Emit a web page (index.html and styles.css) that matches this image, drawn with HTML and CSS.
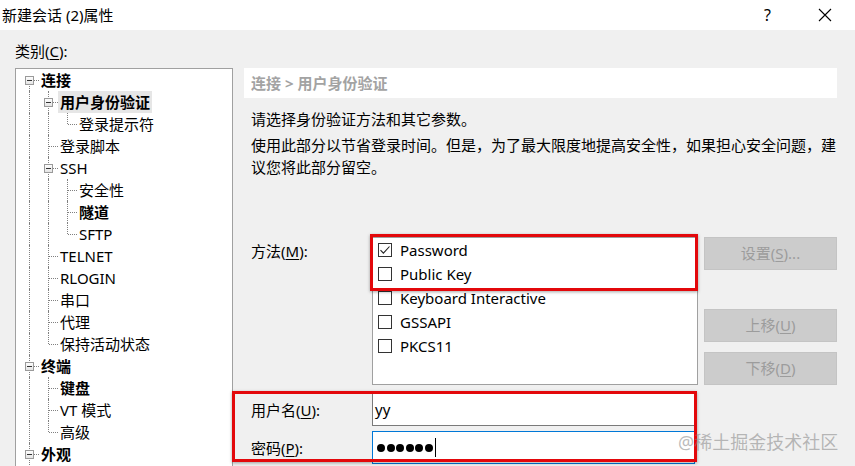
FILE: index.html
```html
<!DOCTYPE html>
<html lang="zh-CN">
<head>
    <meta charset="UTF-8">
    <title>新建会话 (2)属性</title>
    <link rel="stylesheet" href="styles.css">
</head>
<body>
    <div class="titlebar">
        <div class="title">新建会话 (2)属性</div>
        <div class="tb-btn">?</div>
        <div class="tb-btn">
            <svg width="14" height="14" viewBox="0 0 14 14"><path d="M1 1L13 13M13 1L1 13" stroke="#000" stroke-width="1.1" fill="none"/></svg>
        </div>
    </div>

    <div class="main">
        <div class="left">
            <div class="cat-label">类别(<u>C</u>):</div>
            <div class="tree">
                <div class="row"><span class="c f"><i class="box"></i></span><span class="txt b">连接</span></div>
                <div class="row"><span class="c v"></span><span class="c t"><i class="box"></i></span><span class="txt b sel">用户身份验证</span></div>
                <div class="row"><span class="c v"></span><span class="c v"></span><span class="c l"></span><span class="txt">登录提示符</span></div>
                <div class="row"><span class="c v"></span><span class="c t"></span><span class="txt">登录脚本</span></div>
                <div class="row"><span class="c v"></span><span class="c t"><i class="box"></i></span><span class="txt">SSH</span></div>
                <div class="row"><span class="c v"></span><span class="c v"></span><span class="c t"></span><span class="txt">安全性</span></div>
                <div class="row"><span class="c v"></span><span class="c v"></span><span class="c t"></span><span class="txt b">隧道</span></div>
                <div class="row"><span class="c v"></span><span class="c v"></span><span class="c l"></span><span class="txt">SFTP</span></div>
                <div class="row"><span class="c v"></span><span class="c t"></span><span class="txt">TELNET</span></div>
                <div class="row"><span class="c v"></span><span class="c t"></span><span class="txt">RLOGIN</span></div>
                <div class="row"><span class="c v"></span><span class="c t"></span><span class="txt">串口</span></div>
                <div class="row"><span class="c v"></span><span class="c t"></span><span class="txt">代理</span></div>
                <div class="row"><span class="c v"></span><span class="c l"></span><span class="txt">保持活动状态</span></div>
                <div class="row"><span class="c t"><i class="box"></i></span><span class="txt b">终端</span></div>
                <div class="row"><span class="c v"></span><span class="c t"></span><span class="txt b">键盘</span></div>
                <div class="row"><span class="c v"></span><span class="c t"></span><span class="txt">VT 模式</span></div>
                <div class="row"><span class="c v"></span><span class="c l"></span><span class="txt">高级</span></div>
                <div class="row"><span class="c t"><i class="box"></i></span><span class="txt b">外观</span></div>
            </div>
        </div>

        <div class="right">
            <div class="crumb">连接 &gt; 用户身份验证</div>
            <p class="desc">请选择身份验证方法和其它参数。</p>
            <p class="desc">使用此部分以节省登录时间。但是，为了最大限度地提高安全性，如果担心安全问题，建<br>议您将此部分留空。</p>

            <div class="method">
                <div class="label top">方法(<u>M</u>):</div>
                <div class="listbox">
                    <div class="item">
                        <span class="check">
                            <svg width="12" height="12" viewBox="0 0 12 12"><path d="M1.5 6.2L4.4 9.2L10.5 2.5" stroke="#222" stroke-width="1.1" fill="none"/></svg>
                        </span>Password
                    </div>
                    <div class="item"><span class="check"></span>Public Key</div>
                    <div class="item"><span class="check"></span>Keyboard Interactive</div>
                    <div class="item"><span class="check"></span>GSSAPI</div>
                    <div class="item"><span class="check"></span>PKCS11</div>
                </div>
                <div class="buttons">
                    <div class="btn">设置(<u>S</u>)...</div>
                    <div class="btn up">上移(<u>U</u>)</div>
                    <div class="btn down">下移(<u>D</u>)</div>
                </div>
            </div>

            <div class="field">
                <div class="label">用户名(<u>U</u>):</div>
                <div class="input">yy</div>
            </div>
            <div class="field pw">
                <div class="label">密码(<u>P</u>):</div>
                <div class="input focus">
                    <i class="dot"></i><i class="dot"></i><i class="dot"></i><i class="dot"></i><i class="dot"></i><i class="dot"></i><i class="caret"></i>
                </div>
            </div>
        </div>
    </div>

    <div class="mark mark-method"></div>
    <div class="mark mark-login"></div>
    <div class="watermark">@稀土掘金技术社区</div>
</body>
</html>
```

FILE: styles.css
```css
body {
    margin: 0;
    width: 855px;
    height: 466px;
    overflow: hidden;
    position: relative;
    background-color: #f0f0f0;
    font-family: "Noto Sans", "Noto Sans CJK SC", sans-serif;
    font-size: 15px;
    color: #000;
}
u {
    text-underline-offset: 2px;
}
.titlebar {
    height: 30px;
    background-color: #fff;
    display: flex;
    align-items: center;
    padding-right: 2px;
}
.title {
    flex: 1;
    padding-left: 2px;
    line-height: 30px;
}
.tb-btn {
    width: 57px;
    height: 30px;
    display: flex;
    align-items: center;
    justify-content: center;
    font-size: 16px;
}
.main {
    display: flex;
    padding: 10px 18px 0 15px;
    gap: 11px;
}
.left {
    width: 218px;
}
.cat-label {
    line-height: 22px;
}
.tree {
    margin-top: 6px;
    height: 420px;
    box-sizing: border-box;
    background-color: #fff;
    border: 1px solid #a0a0a0;
    padding-left: 4px;
}
.row {
    display: flex;
    height: 22px;
}
.c {
    width: 19px;
    flex: none;
    position: relative;
}
.c::before,
.c::after {
    content: "";
    position: absolute;
}
/* vertical line through the whole row */
.v::before,
.t::before {
    left: 9px;
    top: 0;
    bottom: 0;
    border-left: 1px dotted #808080;
}
/* elbow: only the top half */
.l::before {
    left: 9px;
    top: 0;
    height: 11px;
    border-left: 1px dotted #808080;
}
/* first root: only the bottom half */
.f::before {
    left: 9px;
    top: 11px;
    bottom: 0;
    border-left: 1px dotted #808080;
}
.t::after,
.l::after,
.f::after {
    left: 10px;
    right: 0;
    top: 11px;
    border-top: 1px dotted #808080;
}
.box {
    position: absolute;
    left: 5px;
    top: 7px;
    width: 9px;
    height: 9px;
    box-sizing: border-box;
    border: 1px solid #9a9a9a;
    background: linear-gradient(#fdfdfd, #e4e4e4);
    z-index: 1;
}
.box::after {
    content: "";
    position: absolute;
    left: 1px;
    top: 3px;
    width: 5px;
    height: 1px;
    background-color: #333;
}
.txt {
    padding: 0 2px;
    line-height: 22px;
    white-space: nowrap;
}
.b {
    font-weight: bold;
}
.sel {
    background-color: #e6e6e6;
}
.right {
    flex: 1;
    padding-top: 28px;
}
.crumb {
    height: 30px;
    line-height: 30px;
    padding-left: 7px;
    background-color: #fff;
    color: #a3a3a3;
    font-weight: bold;
}
.desc {
    margin: 10px 0 0;
    padding-left: 7px;
    line-height: 22px;
}
.desc + .desc {
    margin-top: 4px;
}
.method {
    display: flex;
    margin-top: 59px;
}
.label {
    width: 128px;
    flex: none;
    box-sizing: border-box;
    padding-left: 7px;
    line-height: 22px;
}
.label.top {
    padding-top: 3px;
}
.listbox {
    width: 326px;
    height: 148px;
    box-sizing: border-box;
    background-color: #fff;
    border: 1px solid #a0a0a0;
    padding: 0 5px;
}
.item {
    height: 24px;
    display: flex;
    align-items: center;
}
.check {
    width: 14px;
    height: 14px;
    box-sizing: border-box;
    border: 1px solid #333;
    background-color: #fff;
    margin-right: 8px;
    display: flex;
    align-items: center;
    justify-content: center;
}
.buttons {
    width: 133px;
    margin-left: 6px;
    display: flex;
    flex-direction: column;
}
.btn {
    height: 33px;
    box-sizing: border-box;
    background-color: #cccccc;
    border: 1px solid #c4c4c4;
    color: #9c9c9c;
    text-align: center;
    line-height: 31px;
}
.btn.up {
    margin-top: 39px;
}
.btn.down {
    margin-top: 10px;
}
.field {
    display: flex;
    align-items: center;
    margin-top: 8px;
}
.field.pw {
    margin-top: 5px;
}
.input {
    width: 323px;
    height: 33px;
    box-sizing: border-box;
    background-color: #fff;
    border: 1px solid #7a7a7a;
    padding-left: 2px;
    line-height: 31px;
    display: flex;
    align-items: center;
}
.input.focus {
    border-color: #0078d7;
    padding-left: 4px;
}
.dot {
    width: 8px;
    height: 8px;
    border-radius: 50%;
    background-color: #000;
    margin-right: 1.5px;
}
.caret {
    width: 1px;
    height: 19px;
    background-color: #000;
    margin-left: 1px;
}
.mark {
    position: absolute;
    border: 3px solid #e3080b;
    box-shadow: 0 1px 3px rgba(0, 0, 0, 0.35);
}
.mark-method {
    left: 370px;
    top: 234px;
    width: 322px;
    height: 51px;
}
.mark-login {
    left: 232px;
    top: 391px;
    width: 459px;
    height: 65px;
}
.watermark {
    position: absolute;
    left: 678px;
    top: 429px;
    font-size: 18px;
    line-height: 26px;
    color: rgba(130, 130, 130, 0.55);
    white-space: nowrap;
}
```
